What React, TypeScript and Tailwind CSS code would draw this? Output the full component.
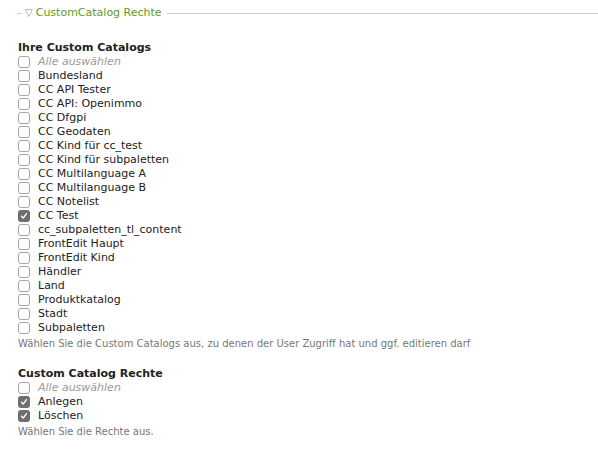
import React from "react";

const catalogs: { label: string; checked?: boolean }[] = [
  { label: "Bundesland" },
  { label: "CC API Tester" },
  { label: "CC API: Openimmo" },
  { label: "CC Dfgpi" },
  { label: "CC Geodaten" },
  { label: "CC Kind für cc_test" },
  { label: "CC Kind für subpaletten" },
  { label: "CC Multilanguage A" },
  { label: "CC Multilanguage B" },
  { label: "CC Notelist" },
  { label: "CC Test", checked: true },
  { label: "cc_subpaletten_tl_content" },
  { label: "FrontEdit Haupt" },
  { label: "FrontEdit Kind" },
  { label: "Händler" },
  { label: "Land" },
  { label: "Produktkatalog" },
  { label: "Stadt" },
  { label: "Subpaletten" },
];

const rights: { label: string; checked?: boolean }[] = [
  { label: "Anlegen", checked: true },
  { label: "Löschen", checked: true },
];

function Box({ checked }: { checked?: boolean }) {
  return checked ? (
    <span className="flex h-[12px] w-[12px] shrink-0 items-center justify-center rounded-[3px] bg-[#6f6f6f]">
      <svg width="8" height="8" viewBox="0 0 8 8" fill="none">
        <path d="M1.5 4.2 L3.2 6 L6.5 1.6" stroke="#fff" strokeWidth="1.3" strokeLinecap="round" strokeLinejoin="round" />
      </svg>
    </span>
  ) : (
    <span className="h-[12px] w-[12px] shrink-0 rounded-[3px] border border-[#a5a5a5] bg-white" />
  );
}

function Row({ label, checked, all }: { label: string; checked?: boolean; all?: boolean }) {
  return (
    <div className="flex h-[14px] items-center">
      <Box checked={checked} />
      <span className={all ? "ml-[8px] italic text-[#999]" : "ml-[8px] text-[#222]"}>{label}</span>
    </div>
  );
}

function Group({
  title,
  items,
  help,
}: {
  title: string;
  items: { label: string; checked?: boolean }[];
  help: string;
}) {
  return (
    <div>
      <div className="h-[14px] font-bold leading-[14px] text-[#222]">{title}</div>
      <Row label="Alle auswählen" all />
      {items.map((it) => (
        <Row key={it.label} label={it.label} checked={it.checked} />
      ))}
      <div className="mt-[2px] text-[10px] leading-[13px] text-[#777]">{help}</div>
    </div>
  );
}

export default function App() {
  return (
    <div
      className="h-[452px] w-[598px] bg-white text-[11px] leading-[14px]"
      style={{ fontFamily: '"DejaVu Sans", Verdana, sans-serif' }}
    >
      <div className="flex items-center pl-[17px] pt-[6px]">
        <span className="h-px w-[4px] bg-[#ccc]" />
        <span className="ml-[4px] text-[10px] text-[#888]">▽</span>
        <span className="ml-[3px] text-[#5f9c1a]">CustomCatalog Rechte</span>
        <span className="ml-[5px] h-px flex-1 bg-[#ccc]" />
      </div>
      <div className="flex flex-col gap-[17px] pl-[18px] pt-[21px]">
        <Group
          title="Ihre Custom Catalogs"
          items={catalogs}
          help="Wählen Sie die Custom Catalogs aus, zu denen der User Zugriff hat und ggf. editieren darf"
        />
        <Group title="Custom Catalog Rechte" items={rights} help="Wählen Sie die Rechte aus." />
      </div>
    </div>
  );
}
